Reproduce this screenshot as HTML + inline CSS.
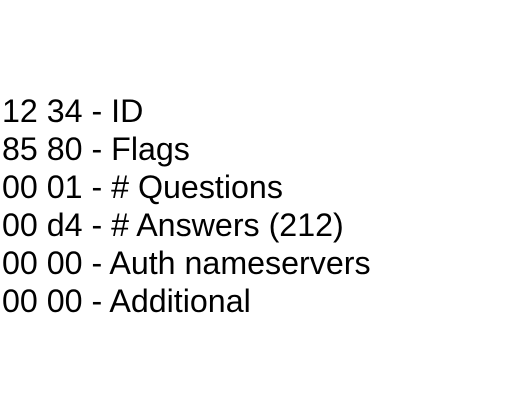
<!DOCTYPE html>
<html><head><style>
html,body{margin:0;padding:0;background:#fff;width:511px;height:411px;overflow:hidden}
.t{position:absolute;left:2px;top:92px;font-family:"Liberation Sans",Arial,sans-serif;font-size:32.2px;line-height:38px;color:#000;white-space:pre}
</style></head><body>
<div class="t">12 34 - ID
85 80 - Flags
00 01 - # Questions
00 d4 - # Answers (212)
00 00 - Auth nameservers
00 00 - Additional</div>
</body></html>
